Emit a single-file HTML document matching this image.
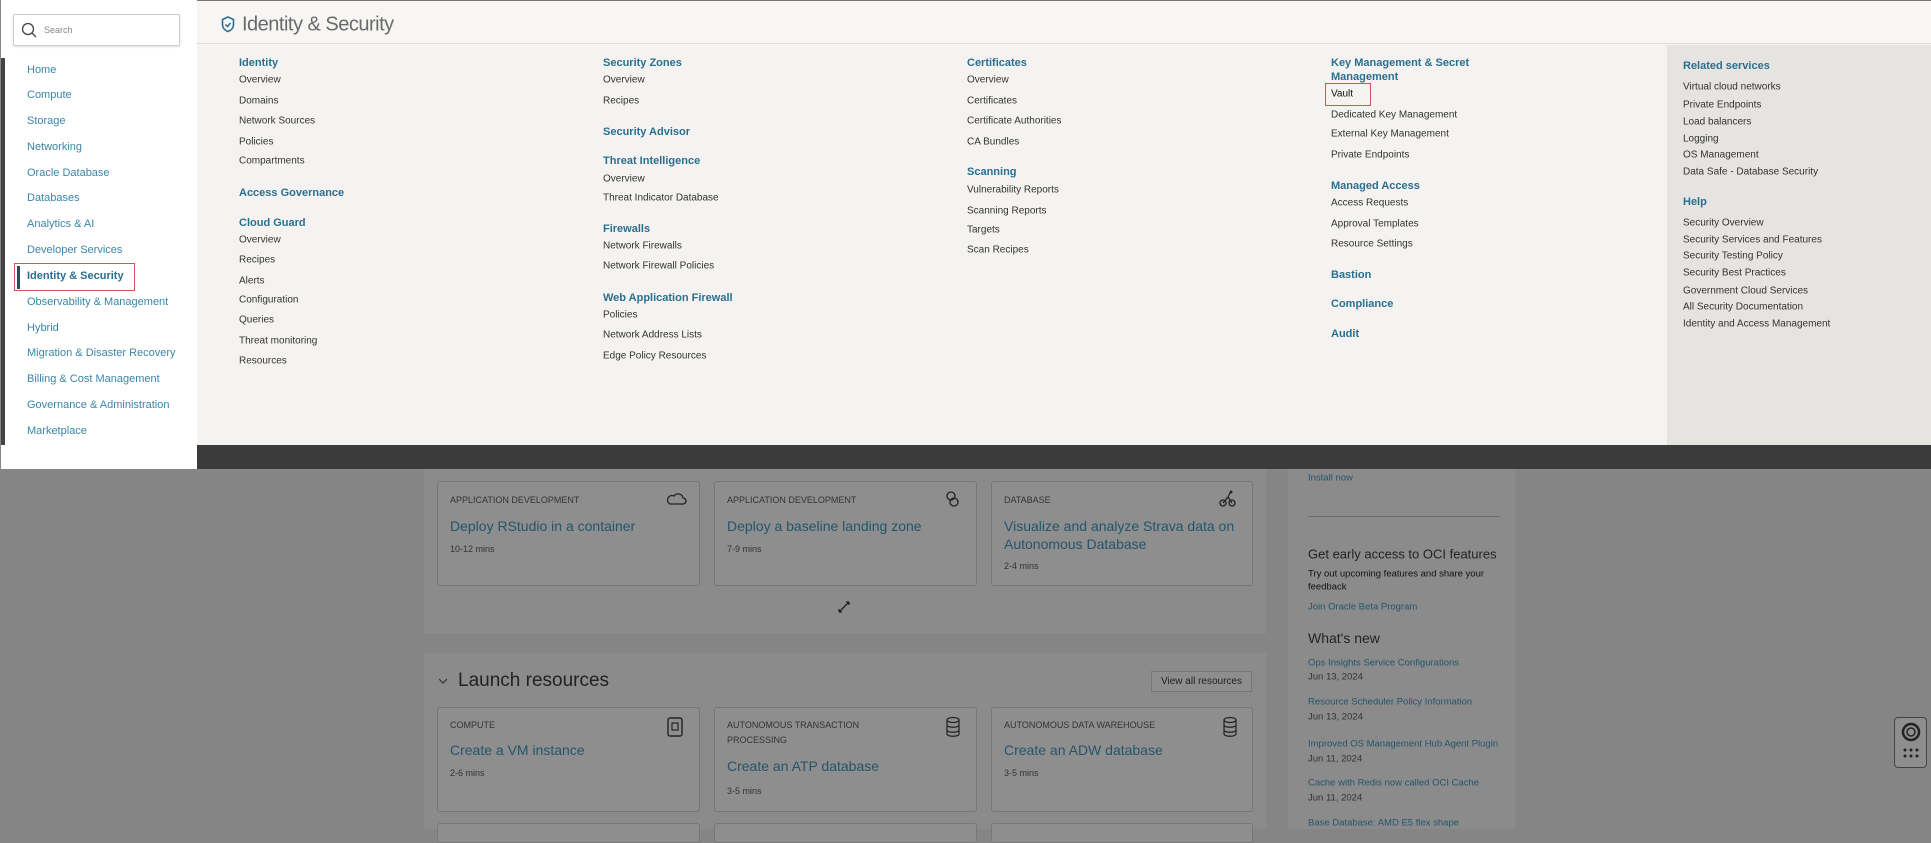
<!DOCTYPE html>
<html><head><meta charset="utf-8"><style>
*{margin:0;padding:0;box-sizing:border-box}
body{width:1931px;height:829px;overflow:hidden;position:relative;background:#858585;font-family:"Liberation Sans",sans-serif;}
.a{position:absolute;white-space:nowrap;transform:translateY(-50%);}
.h{font-weight:bold;color:#2b6f8f;font-size:11px}
.i{color:#333;font-size:10px}
.n{color:#3a86a8;font-size:11px}
.card{position:absolute;background:#8e8e8e;border:1px solid #777;border-radius:3px}
.lab{font-size:9px;color:#333}
.tt{font-size:14px;color:#24556b}
.mn{font-size:9px;color:#333}
.lk{font-size:9.5px;color:#24556b}
.dt{font-size:9.5px;color:#333}
</style></head><body>
<div style="position:absolute;left:424px;top:469px;width:842px;height:165px;background:#8b8b8b"></div>
<div style="position:absolute;left:424px;top:653px;width:842px;height:176px;background:#8b8b8b"></div>
<div style="position:absolute;left:1288px;top:469px;width:227px;height:360px;background:#8b8b8b"></div>

<div class="card" style="left:437px;top:481px;width:263px;height:105px"></div>
<div class="card" style="left:714px;top:481px;width:263px;height:105px"></div>
<div class="card" style="left:991px;top:481px;width:262px;height:105px"></div>
<div class="a lab" style="left:450px;top:500px">APPLICATION DEVELOPMENT</div>
<div class="a tt" style="left:450px;top:526px">Deploy RStudio in a container</div>
<div class="a mn" style="left:450px;top:549px">10-12 mins</div>
<div class="a lab" style="left:727px;top:500px">APPLICATION DEVELOPMENT</div>
<div class="a tt" style="left:727px;top:526px">Deploy a baseline landing zone</div>
<div class="a mn" style="left:727px;top:549px">7-9 mins</div>
<div class="a lab" style="left:1004px;top:500px">DATABASE</div>
<div class="a tt" style="left:1004px;top:526px">Visualize and analyze Strava data on</div>
<div class="a tt" style="left:1004px;top:544px">Autonomous Database</div>
<div class="a mn" style="left:1004px;top:566px">2-4 mins</div>
<svg style="position:absolute;left:667px;top:490px" width="20" height="16" viewBox="0 0 20 16"><path d="M3 14h13a3 3 0 0 0 0-6 5 5 0 0 0-9-2 4 4 0 0 0-4 8z" fill="none" stroke="#222" stroke-width="1.3"/></svg>
<svg style="position:absolute;left:944px;top:490px" width="16" height="18" viewBox="0 0 16 18"><circle cx="7" cy="6" r="4" fill="none" stroke="#222" stroke-width="1.3"/><circle cx="10" cy="12" r="4" fill="none" stroke="#222" stroke-width="1.3"/></svg>
<svg style="position:absolute;left:1219px;top:489px" width="18" height="18" viewBox="0 0 18 18"><circle cx="4" cy="14" r="3" fill="none" stroke="#222" stroke-width="1.3"/><circle cx="13" cy="14" r="3" fill="none" stroke="#222" stroke-width="1.3"/><path d="M4 14l5-6 4 6M9 8l2-4" fill="none" stroke="#222" stroke-width="1.3"/><circle cx="12" cy="3" r="1.5" fill="#222"/></svg>
<svg style="position:absolute;left:837px;top:600px" width="14" height="14" viewBox="0 0 14 14"><path d="M2 12L12 2M2 12v-3M2 12h3M12 2H9M12 2v3" stroke="#222" stroke-width="1.3" fill="none"/></svg>

<svg style="position:absolute;left:437px;top:676px" width="12" height="10" viewBox="0 0 12 10"><path d="M2 3l4 4 4-4" fill="none" stroke="#333" stroke-width="1.2"/></svg>
<div class="a" style="left:458px;top:681px;font-size:19px;color:#222">Launch resources</div>
<div style="position:absolute;left:1151px;top:671px;width:101px;height:21px;border:1px solid #777;background:#8e8e8e;font-size:10px;color:#222;text-align:center;line-height:19px">View all resources</div>

<div class="card" style="left:437px;top:707px;width:263px;height:105px"></div>
<div class="card" style="left:714px;top:707px;width:263px;height:105px"></div>
<div class="card" style="left:991px;top:707px;width:262px;height:105px"></div>
<div class="card" style="left:437px;top:823px;width:263px;height:20px"></div>
<div class="card" style="left:714px;top:823px;width:263px;height:20px"></div>
<div class="card" style="left:991px;top:823px;width:262px;height:20px"></div>
<div class="a lab" style="left:450px;top:725px">COMPUTE</div>
<div class="a tt" style="left:450px;top:750px">Create a VM instance</div>
<div class="a mn" style="left:450px;top:773px">2-6 mins</div>
<div class="a lab" style="left:727px;top:725px">AUTONOMOUS TRANSACTION</div>
<div class="a lab" style="left:727px;top:740px">PROCESSING</div>
<div class="a tt" style="left:727px;top:766px">Create an ATP database</div>
<div class="a mn" style="left:727px;top:791px">3-5 mins</div>
<div class="a lab" style="left:1004px;top:725px">AUTONOMOUS DATA WAREHOUSE</div>
<div class="a tt" style="left:1004px;top:750px">Create an ADW database</div>
<div class="a mn" style="left:1004px;top:773px">3-5 mins</div>
<svg style="position:absolute;left:666px;top:716px" width="18" height="22" viewBox="0 0 18 22"><rect x="2" y="2" width="14" height="18" rx="2" fill="none" stroke="#222" stroke-width="1.4"/><rect x="6" y="7" width="6" height="7" fill="none" stroke="#222" stroke-width="1.2"/></svg>
<svg style="position:absolute;left:945px;top:716px" width="16" height="22" viewBox="0 0 16 22"><ellipse cx="8" cy="4" rx="6" ry="2.5" fill="none" stroke="#222" stroke-width="1.2"/><path d="M2 4v14c0 3 12 3 12 0V4M2 9c0 3 12 3 12 0M2 14c0 3 12 3 12 0" fill="none" stroke="#222" stroke-width="1.2"/></svg>
<svg style="position:absolute;left:1222px;top:716px" width="16" height="22" viewBox="0 0 16 22"><ellipse cx="8" cy="4" rx="6" ry="2.5" fill="none" stroke="#222" stroke-width="1.2"/><path d="M2 4v14c0 3 12 3 12 0V4M2 9c0 3 12 3 12 0M2 14c0 3 12 3 12 0" fill="none" stroke="#222" stroke-width="1.2"/></svg>

<div class="a lk" style="left:1308px;top:478px">Install now</div>
<div style="position:absolute;left:1308px;top:516px;width:192px;height:1px;background:#6a6a6a"></div>
<div class="a" style="left:1308px;top:554px;font-size:13px;color:#222">Get early access to OCI features</div>
<div class="a" style="left:1308px;top:574px;font-size:9.5px;color:#111">Try out upcoming features and share your</div>
<div class="a" style="left:1308px;top:587px;font-size:9.5px;color:#111">feedback</div>
<div class="a lk" style="left:1308px;top:607px">Join Oracle Beta Program</div>
<div class="a" style="left:1308px;top:638px;font-size:14px;color:#222">What's new</div>
<div class="a lk" style="left:1308px;top:663px">Ops Insights Service Configurations</div>
<div class="a dt" style="left:1308px;top:677px">Jun 13, 2024</div>
<div class="a lk" style="left:1308px;top:702px">Resource Scheduler Policy Information</div>
<div class="a dt" style="left:1308px;top:717px">Jun 13, 2024</div>
<div class="a lk" style="left:1308px;top:744px">Improved OS Management Hub Agent Plugin</div>
<div class="a dt" style="left:1308px;top:759px">Jun 11, 2024</div>
<div class="a lk" style="left:1308px;top:783px">Cache with Redis now called OCI Cache</div>
<div class="a dt" style="left:1308px;top:798px">Jun 11, 2024</div>
<div class="a lk" style="left:1308px;top:823px">Base Database: AMD E5 flex shape</div>

<div style="position:absolute;left:1894px;top:717px;width:33px;height:51px;border:1.5px solid #444;border-radius:4px;background:#8e8e8e"></div>
<svg style="position:absolute;left:1898px;top:721px" width="26" height="44" viewBox="0 0 26 44"><circle cx="13" cy="11" r="8" fill="none" stroke="#222" stroke-width="2.5"/><circle cx="13" cy="11" r="4" fill="none" stroke="#222" stroke-width="1.5"/><g fill="#222"><circle cx="7" cy="29" r="1.5"/><circle cx="13" cy="29" r="1.5"/><circle cx="19" cy="29" r="1.5"/><circle cx="7" cy="35" r="1.5"/><circle cx="13" cy="35" r="1.5"/><circle cx="19" cy="35" r="1.5"/></g></svg>

<div style="position:absolute;left:197px;top:0;width:1734px;height:445px;background:#f4f3f1"></div>
<div style="position:absolute;left:197px;top:0;width:1734px;height:44px;background:#f7f6f4;border-bottom:1px solid #ddd"></div>
<div style="position:absolute;left:1667px;top:45px;width:264px;height:400px;background:#e6e4e0"></div>
<div style="position:absolute;left:197px;top:445px;width:1734px;height:24px;background:#3b3b3b"></div>
<div style="position:absolute;left:0;top:0;width:1931px;height:1px;background:#777"></div>
<svg style="position:absolute;left:221px;top:16px" width="14" height="17" viewBox="0 0 14 17"><path d="M7 1L1.5 3.5v5c0 3.5 2.5 6 5.5 7 3-1 5.5-3.5 5.5-7v-5z" fill="none" stroke="#2b6f8f" stroke-width="1.6"/><path d="M4.5 8.5l2 2 3-3.5" fill="none" stroke="#2b6f8f" stroke-width="1.5"/></svg>
<div class="a" style="left:242px;top:25px;font-size:20px;color:#6a6a6a;letter-spacing:-0.5px">Identity &amp; Security</div>

<div class="a h" style="left:239px;top:63px">Identity</div>
<div class="a i" style="left:239px;top:80px">Overview</div>
<div class="a i" style="left:239px;top:101px">Domains</div>
<div class="a i" style="left:239px;top:121px">Network Sources</div>
<div class="a i" style="left:239px;top:142px">Policies</div>
<div class="a i" style="left:239px;top:161px">Compartments</div>
<div class="a h" style="left:239px;top:193px">Access Governance</div>
<div class="a h" style="left:239px;top:223px">Cloud Guard</div>
<div class="a i" style="left:239px;top:240px">Overview</div>
<div class="a i" style="left:239px;top:260px">Recipes</div>
<div class="a i" style="left:239px;top:281px">Alerts</div>
<div class="a i" style="left:239px;top:300px">Configuration</div>
<div class="a i" style="left:239px;top:320px">Queries</div>
<div class="a i" style="left:239px;top:341px">Threat monitoring</div>
<div class="a i" style="left:239px;top:361px">Resources</div>

<div class="a h" style="left:603px;top:63px">Security Zones</div>
<div class="a i" style="left:603px;top:80px">Overview</div>
<div class="a i" style="left:603px;top:101px">Recipes</div>
<div class="a h" style="left:603px;top:132px">Security Advisor</div>
<div class="a h" style="left:603px;top:161px">Threat Intelligence</div>
<div class="a i" style="left:603px;top:179px">Overview</div>
<div class="a i" style="left:603px;top:198px">Threat Indicator Database</div>
<div class="a h" style="left:603px;top:229px">Firewalls</div>
<div class="a i" style="left:603px;top:246px">Network Firewalls</div>
<div class="a i" style="left:603px;top:266px">Network Firewall Policies</div>
<div class="a h" style="left:603px;top:298px">Web Application Firewall</div>
<div class="a i" style="left:603px;top:315px">Policies</div>
<div class="a i" style="left:603px;top:335px">Network Address Lists</div>
<div class="a i" style="left:603px;top:356px">Edge Policy Resources</div>

<div class="a h" style="left:967px;top:63px">Certificates</div>
<div class="a i" style="left:967px;top:80px">Overview</div>
<div class="a i" style="left:967px;top:101px">Certificates</div>
<div class="a i" style="left:967px;top:121px">Certificate Authorities</div>
<div class="a i" style="left:967px;top:142px">CA Bundles</div>
<div class="a h" style="left:967px;top:172px">Scanning</div>
<div class="a i" style="left:967px;top:190px">Vulnerability Reports</div>
<div class="a i" style="left:967px;top:211px">Scanning Reports</div>
<div class="a i" style="left:967px;top:230px">Targets</div>
<div class="a i" style="left:967px;top:250px">Scan Recipes</div>

<div class="a h" style="left:1331px;top:63px">Key Management &amp; Secret</div>
<div class="a h" style="left:1331px;top:77px">Management</div>
<div style="position:absolute;left:1325px;top:83px;width:46px;height:23px;border:1.5px solid #d9534f"></div>
<div class="a i" style="left:1331px;top:94px;color:#111">Vault</div>
<div class="a i" style="left:1331px;top:115px">Dedicated Key Management</div>
<div class="a i" style="left:1331px;top:134px">External Key Management</div>
<div class="a i" style="left:1331px;top:155px">Private Endpoints</div>
<div class="a h" style="left:1331px;top:186px">Managed Access</div>
<div class="a i" style="left:1331px;top:203px">Access Requests</div>
<div class="a i" style="left:1331px;top:224px">Approval Templates</div>
<div class="a i" style="left:1331px;top:244px">Resource Settings</div>
<div class="a h" style="left:1331px;top:275px">Bastion</div>
<div class="a h" style="left:1331px;top:304px">Compliance</div>
<div class="a h" style="left:1331px;top:334px">Audit</div>

<div class="a h" style="left:1683px;top:66px">Related services</div>
<div class="a i" style="left:1683px;top:87px">Virtual cloud networks</div>
<div class="a i" style="left:1683px;top:105px">Private Endpoints</div>
<div class="a i" style="left:1683px;top:122px">Load balancers</div>
<div class="a i" style="left:1683px;top:139px">Logging</div>
<div class="a i" style="left:1683px;top:155px">OS Management</div>
<div class="a i" style="left:1683px;top:172px">Data Safe - Database Security</div>
<div class="a h" style="left:1683px;top:202px">Help</div>
<div class="a i" style="left:1683px;top:223px">Security Overview</div>
<div class="a i" style="left:1683px;top:240px">Security Services and Features</div>
<div class="a i" style="left:1683px;top:256px">Security Testing Policy</div>
<div class="a i" style="left:1683px;top:273px">Security Best Practices</div>
<div class="a i" style="left:1683px;top:291px">Government Cloud Services</div>
<div class="a i" style="left:1683px;top:307px">All Security Documentation</div>
<div class="a i" style="left:1683px;top:324px">Identity and Access Management</div>

<div style="position:absolute;left:0;top:0;width:197px;height:469px;background:#fff;border-left:1px solid #888"></div>
<div style="position:absolute;left:1px;top:58px;width:4px;height:387px;background:#444"></div>
<div style="position:absolute;left:13px;top:14px;width:167px;height:32px;border:1px solid #ccc;border-radius:2px;box-shadow:0 1px 2px #ddd"></div>
<svg style="position:absolute;left:21px;top:22px" width="16" height="16" viewBox="0 0 16 16"><circle cx="7" cy="7" r="5.5" fill="none" stroke="#444" stroke-width="1.3"/><path d="M11 11l4 4" stroke="#444" stroke-width="1.3"/></svg>
<div class="a" style="left:44px;top:30px;font-size:9px;color:#888">Search</div>
<div class="a n" style="left:27px;top:70px">Home</div>
<div class="a n" style="left:27px;top:95px">Compute</div>
<div class="a n" style="left:27px;top:121px">Storage</div>
<div class="a n" style="left:27px;top:147px">Networking</div>
<div class="a n" style="left:27px;top:173px">Oracle Database</div>
<div class="a n" style="left:27px;top:198px">Databases</div>
<div class="a n" style="left:27px;top:224px">Analytics &amp; AI</div>
<div class="a n" style="left:27px;top:250px">Developer Services</div>
<div style="position:absolute;left:14px;top:263px;width:121px;height:28px;border:1.5px solid #d9534f"></div>
<div style="position:absolute;left:17px;top:266px;width:3px;height:23px;background:#2b4a5a"></div>
<div class="a n" style="left:27px;top:276px;font-weight:bold;color:#2b6f8f">Identity &amp; Security</div>
<div class="a n" style="left:27px;top:302px">Observability &amp; Management</div>
<div class="a n" style="left:27px;top:328px">Hybrid</div>
<div class="a n" style="left:27px;top:353px">Migration &amp; Disaster Recovery</div>
<div class="a n" style="left:27px;top:379px">Billing &amp; Cost Management</div>
<div class="a n" style="left:27px;top:405px">Governance &amp; Administration</div>
<div class="a n" style="left:27px;top:431px">Marketplace</div>
</body></html>
